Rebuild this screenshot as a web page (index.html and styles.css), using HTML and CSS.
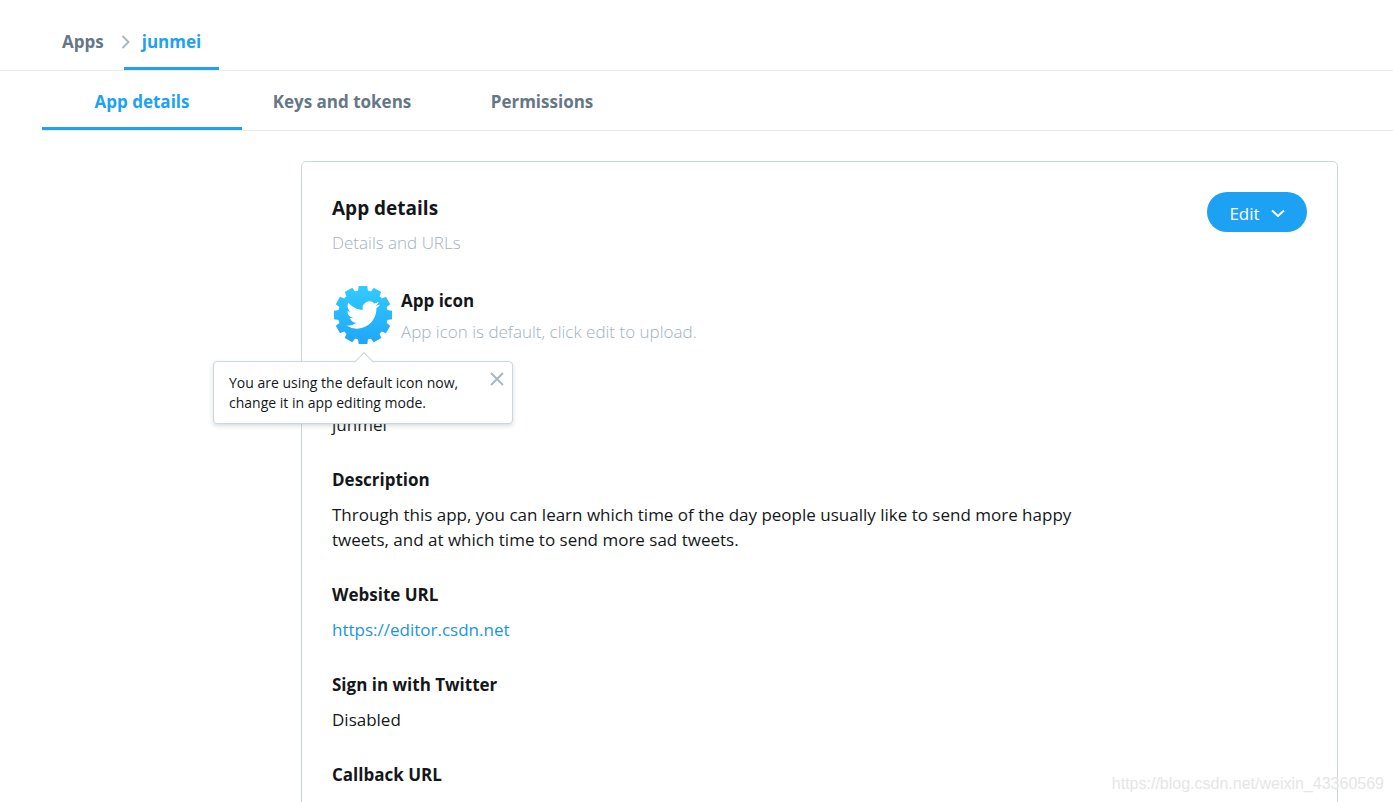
FILE: index.html
```html
<!DOCTYPE html>
<html lang="en">
<head>
<meta charset="utf-8">
<title>junmei - App details</title>
<link rel="stylesheet" href="styles.css">
</head>
<body>
<div class="page">
  <header>
    <nav class="crumbs" aria-label="Breadcrumb">
      <a class="crumb" href="#apps">Apps</a>
      <svg class="crumb-arrow" viewBox="0 0 10 16" aria-hidden="true"><path d="M1.500 2 7.500 8 1.500 14"/></svg>
      <a class="crumb crumb-current" href="#junmei" aria-current="page">junmei</a>
    </nav>
    <nav class="tabs" aria-label="App sections">
      <a class="tab tab-active" href="#details">App details</a>
      <a class="tab" href="#keys">Keys and tokens</a>
      <a class="tab" href="#permissions">Permissions</a>
    </nav>
  </header>
  <main class="card">
    <div class="card-head">
      <div>
        <h1 class="title">App details</h1>
        <p class="muted">Details and URLs</p>
      </div>
      <button class="edit" type="button">Edit
        <svg class="edit-arrow" viewBox="0 0 14 9" aria-hidden="true"><path d="M1 1.500 7 7 13 1.500"/></svg>
      </button>
    </div>
    <section class="icon-row">
      <div class="icon-box">
        <svg class="app-icon" viewBox="0 0 60 60" role="img" aria-label="Default app icon">
          <defs>
            <linearGradient id="sky" x1="0" y1="0" x2="0" y2="1">
              <stop offset="0" stop-color="#33ccff"/><stop offset="1" stop-color="#1fa4f8"/>
            </linearGradient>
            <path id="teeth" d="M25 6 25.700 1h8.600l.7 5zM25 54 25.700 59h8.600l.7-5z"/>
            <mask id="gear">
              <g fill="#fff">
                <circle cx="30" cy="30" r="25"/>
                <use href="#teeth"/>
                <use href="#teeth" transform="rotate(30 30 30)"/>
                <use href="#teeth" transform="rotate(60 30 30)"/>
                <use href="#teeth" transform="rotate(90 30 30)"/>
                <use href="#teeth" transform="rotate(120 30 30)"/>
                <use href="#teeth" transform="rotate(150 30 30)"/>
              </g>
            </mask>
          </defs>
          <rect width="60" height="60" fill="url(#sky)" mask="url(#gear)"/>
          <path fill="#fff" transform="translate(13.200 13.200) scale(1.400)" d="M23.953 4.570a10 10 0 0 1-2.825.775 4.958 4.958 0 0 0 2.163-2.723c-.951.555-2.005.959-3.127 1.184a4.920 4.920 0 0 0-8.384 4.482C7.690 8.095 4.067 6.130 1.640 3.162a4.822 4.822 0 0 0-.666 2.475c0 1.710.870 3.213 2.188 4.096a4.904 4.904 0 0 1-2.228-.616v.060a4.923 4.923 0 0 0 3.946 4.827 4.996 4.996 0 0 1-2.212.085 4.936 4.936 0 0 0 4.604 3.417 9.867 9.867 0 0 1-6.102 2.105c-.390 0-.779-.023-1.170-.067a13.995 13.995 0 0 0 7.557 2.209c9.053 0 13.998-7.496 13.998-13.985 0-.210 0-.420-.015-.630A9.935 9.935 0 0 0 24 4.590z"/>
        </svg>
        <div class="tip" role="status">
          <p class="tip-text">You are using the default icon now, change it in app editing mode.</p>
          <button class="tip-close" type="button" aria-label="Close">
            <svg viewBox="0 0 14 14" aria-hidden="true"><path d="M1 1l12 12M13 1 1 13"/></svg>
          </button>
        </div>
      </div>
      <div class="icon-text">
        <h2 class="label">App icon</h2>
        <p class="muted">App icon is default, click edit to upload.</p>
      </div>
    </section>
    <p class="app-name">junmei</p>
    <dl class="fields">
      <div class="field"><dt class="label">Description</dt><dd class="value">Through this app, you can learn which time of the day people usually like to send more happy tweets, and at which time to send more sad tweets.</dd></div>
      <div class="field"><dt class="label">Website URL</dt><dd class="value"><a class="link" href="https://editor.csdn.net">https://editor.csdn.net</a></dd></div>
      <div class="field"><dt class="label">Sign in with Twitter</dt><dd class="value">Disabled</dd></div>
      <div class="field"><dt class="label">Callback URL</dt></div>
    </dl>
  </main>
  <div class="watermark">https://blog.csdn.net/weixin_43360569</div>
</div>
</body>
</html>
```

FILE: styles.css
```css
* { box-sizing: border-box; }
body, h1, h2, p, dl, dd { margin: 0; }
body {
  background: #fff;
  color: #14171a;
  font: 17px/25px "Open Sans", "Noto Sans", sans-serif;
}
a { text-decoration: none; }
button { font: inherit; border: 0; cursor: pointer; }
svg { display: block; }
.page {
  position: relative;
  display: flex;
  flex-direction: column;
  height: 100vh;
  overflow: hidden;
}
.crumbs {
  display: flex;
  align-items: center;
  padding-left: 62px;
  border-bottom: 1px solid #e6ecf0;
}
.crumb {
  padding: 29px 0 16px;
  color: #657786;
  font-weight: 700;
}
.crumb-arrow {
  width: 10px;
  height: 16px;
  margin: 13px -7px 0 17px;
  fill: none;
  stroke: #aab8c2;
  stroke-width: 2;
}
.crumb-current {
  padding: 29px 18px 13px;
  border-bottom: 3px solid #1da1f2;
  color: #1da1f2;
}
.tabs {
  display: flex;
  margin-left: 42px;
  border-bottom: 1px solid #e6ecf0;
}
.tab {
  width: 200px;
  padding: 18px 0 13px;
  border-bottom: 3px solid transparent;
  color: #657786;
  font-weight: 700;
  text-align: center;
}
.tab-active { border-color: #1da1f2; color: #1da1f2; }
.card {
  flex: none;
  margin: 30px 55px 30px 301px;
  padding: 30px;
  border: 1px solid #ccd6dd;
  border-radius: 5px;
}
.card-head {
  display: flex;
  justify-content: space-between;
  align-items: flex-start;
  margin-bottom: 30px;
}
.title { font-size: 19px; line-height: 33px; margin-bottom: 5px; }
.muted { color: #a3b2bd; font-weight: 300; }
.edit {
  display: flex;
  align-items: center;
  justify-content: center;
  gap: 11px;
  width: 100px;
  height: 40px;
  padding: 2px 0 0;
  border-radius: 20px;
  background: #1da1f2;
  color: #fff;
}
.edit-arrow { width: 14px; height: 9px; fill: none; stroke: #fff; stroke-width: 2; }
.icon-row { display: flex; gap: 8px; margin-bottom: 67px; }
.icon-box { position: relative; margin-left: 1px; }
.app-icon { width: 60px; height: 60px; }
.icon-text { padding-top: 3px; }
.label { font-size: 17px; line-height: 25px; font-weight: 700; }
.icon-text .label { margin-bottom: 6px; }
.tip {
  position: absolute;
  top: 76px;
  left: -120px;
  display: flex;
  align-items: flex-start;
  justify-content: space-between;
  width: 300px;
  padding: 10px 8px 10px 15px;
  background: #fff;
  border: 1px solid #ccd6dd;
  border-radius: 4px;
  box-shadow: 0 2px 4px rgba(101, 119, 134, 0.25);
}
.tip::before {
  content: "";
  position: absolute;
  top: -7px;
  left: 143px;
  width: 13px;
  height: 13px;
  background: #fff;
  border: solid #ccd6dd;
  border-width: 1px 0 0 1px;
  transform: rotate(45deg);
}
.tip-text { width: 245px; padding-top: 1px; font-size: 14px; line-height: 20px; }
.tip-close { padding: 0; background: none; }
.tip-close svg { width: 14px; height: 14px; fill: none; stroke: #aab8c2; stroke-width: 2; }
.app-name, .field { margin-bottom: 30px; }
.field .label { margin-bottom: 10px; }
.value { max-width: 750px; }
.link { color: #1b95e0; }
.watermark {
  position: absolute;
  right: 9px;
  bottom: 8px;
  color: #e6e6e6;
  font: 16px/20px "Liberation Sans", Arial, sans-serif;
}
```
